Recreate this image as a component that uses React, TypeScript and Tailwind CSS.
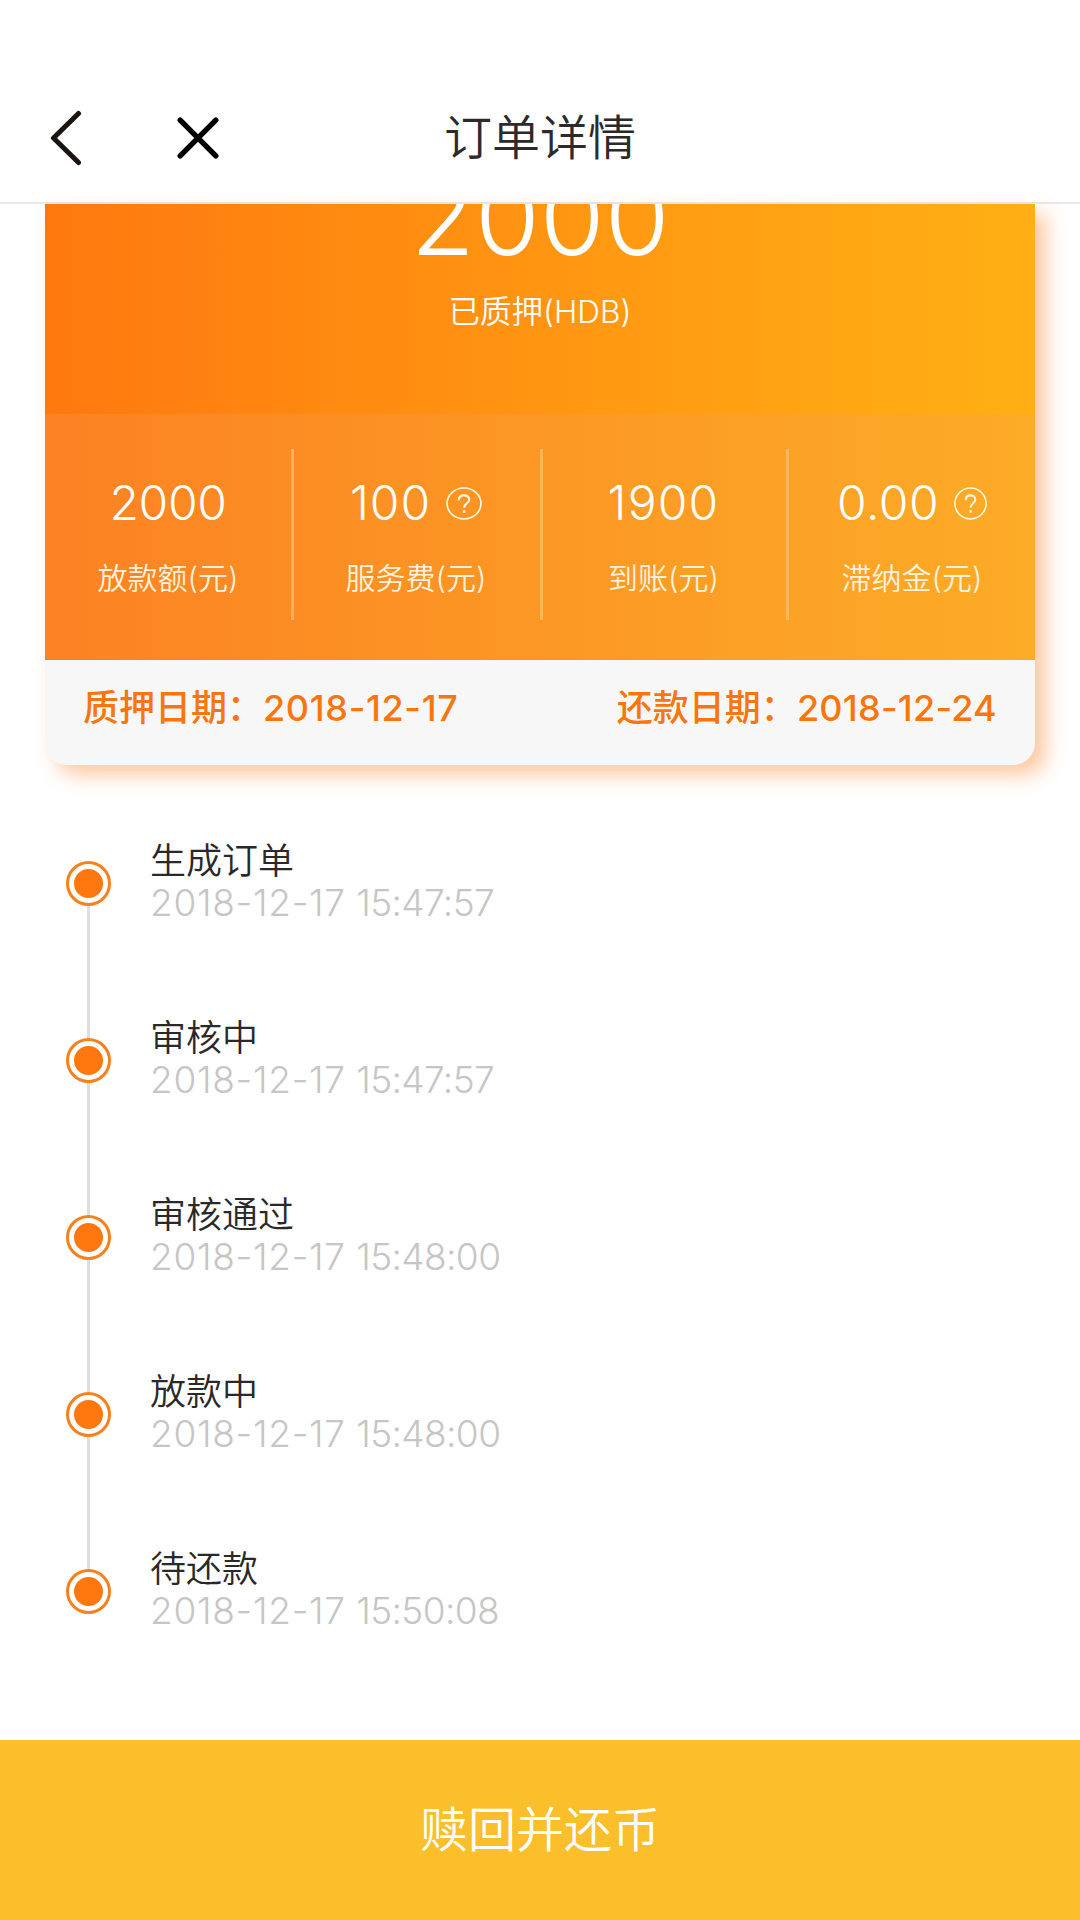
type Stat = { value: string; label: string; help?: string; box: string; divider?: boolean; tracking: string };

const stats: Stat[] = [
  { value: '2000', label: '放款额(元)', box: 'w-[249px]', divider: true, tracking: 'tracking-[-0.3px]' },
  { value: '100', label: '服务费(元)', help: 'w-9', box: 'w-[249px] pr-[2px]', divider: true, tracking: 'tracking-[1px]' },
  { value: '1900', label: '到账(元)', box: 'w-[246px] pr-[2px]', divider: true, tracking: 'tracking-[1.2px]' },
  { value: '0.00', label: '滞纳金(元)', help: 'w-[33px]', box: 'w-[246px] pr-0', tracking: 'tracking-[0.5px]' },
];

const steps = [
  { title: '生成订单', date: '2018-12-17', time: '15:47:57' },
  { title: '审核中', date: '2018-12-17', time: '15:47:57' },
  { title: '审核通过', date: '2018-12-17', time: '15:48:00' },
  { title: '放款中', date: '2018-12-17', time: '15:48:00' },
  { title: '待还款', date: '2018-12-17', time: '15:50:08' },
];

function HelpIcon({ size }: { size: string }) {
  return (
    <svg className={`h-[33px] ${size}`} viewBox="0 0 36 33" preserveAspectRatio="none" fill="none" stroke="#fff6dc">
      <ellipse cx="18" cy="16.5" rx="17" ry="15.5" strokeWidth="1.7" />
      <path d="M12.8 13.2c0-3 2.2-4.8 5.2-4.8s5.2 1.8 5.2 4.4c0 3.6-5.1 3.8-5.1 8" strokeWidth="2.2" />
      <path d="M18.1 23.2v2.6" strokeWidth="2.4" />
    </svg>
  );
}

function Header() {
  return (
    <header className="grid h-[204px] grid-cols-[1fr_auto_1fr] border-b-[2px] border-[#e9e9eb] bg-white pt-[73px]">
      <div className="flex h-[130px] items-center">
        <svg className="ml-[48px] h-[56px] w-[36px]" viewBox="0 0 36 56" fill="none" stroke="#1c1410" strokeWidth="5" strokeLinecap="round" strokeLinejoin="round">
          <path d="M30.5 3.5 5.5 28l25 24.5" />
        </svg>
        <svg className="ml-[92px] h-[44px] w-[44px]" viewBox="0 0 44 44" fill="none" stroke="#000" strokeWidth="5.4" strokeLinecap="round">
          <path d="m4.2 4.2 35.6 35.6M39.8 4.2 4.2 39.8" />
        </svg>
      </div>
      <h1 className="mt-[29px] h-[72px] text-[48px] leading-[72px] font-[350] text-[#2b2b2d]">订单详情</h1>
    </header>
  );
}

function OrderCard() {
  return (
    <section className="mx-[45px] h-[561px] w-[990px] rounded-b-[22px] bg-[#f7f7f7] shadow-[11px_10px_20px_rgba(250,125,30,0.42)]">
      <div className="bg-linear-to-r from-[#ff780f] to-[#ffb014] text-white">
        <div className="h-[210px] overflow-hidden text-center">
          <div className="-mt-[37px] h-[100px] text-[105px] leading-[100px]">2000</div>
          <div className="mt-[23px] text-[31.5px] leading-[44px] font-[350]">已质押(HDB)</div>
        </div>
        <div className="flex h-[246px] bg-[#f3a161]/25 pt-[35px]">
          {stats.map((s) => (
            <div
              key={s.label}
              className={`flex h-[171px] flex-col items-center ${s.box} ${s.divider ? 'border-r-[3px] border-[#ffc56c]/70' : ''}`}
            >
              <div className={`mt-[24px] flex h-[60px] items-center gap-[15px] text-[48px] leading-[60px] font-[350] ${s.tracking}`}>
                {s.value}
                {s.help && <HelpIcon size={s.help} />}
              </div>
              <div className="mt-[23px] text-[30px] leading-[44px] font-[350] text-[#fff1dc]">{s.label}</div>
            </div>
          ))}
        </div>
      </div>
      <div className="flex h-[105px] justify-between px-[38px] text-[36px] leading-[97px] font-medium text-[#f8760d]">
        <span>
          质押日期：<span className="tracking-[0.65px]">2018-12-17</span>
        </span>
        <span>
          还款日期：<span className="tracking-[0.25px]">2018-12-24</span>
        </span>
      </div>
    </section>
  );
}

function Timeline() {
  return (
    <ol className="mt-[73px] flex-1 pl-[66px]">
      {steps.map((s, i) => (
        <li key={s.title} className="flex h-[177px]">
          <div className="flex w-[45px] flex-col items-center pt-[23px]">
            <div className="flex h-[45px] w-[45px] shrink-0 items-center justify-center rounded-full border-[3px] border-[#f8801d] bg-white">
              <div className="h-[29px] w-[29px] rounded-full bg-[#ff780f]" />
            </div>
            {i < steps.length - 1 && <div className="-mb-[23px] w-[3px] flex-1 bg-[#dfdfdf]" />}
          </div>
          <div className="ml-[39px]">
            <div className="h-[44px] text-[36px] leading-[46px] font-[350] text-[#29292b]">{s.title}</div>
            <div className="h-[42px] text-[37px] leading-[42px] text-[#c6c6c6]">
              <span className="tracking-[0.7px]">{s.date}</span> <span className="tracking-[-0.6px]">{s.time}</span>
            </div>
          </div>
        </li>
      ))}
    </ol>
  );
}

export default function App() {
  return (
    <main className="flex h-[1920px] w-[1080px] flex-col overflow-hidden bg-white font-['Inter','Noto_Sans_CJK_SC',sans-serif] font-light whitespace-nowrap">
      <Header />
      <OrderCard />
      <Timeline />
      <button className="h-[180px] w-full bg-[#fbbf2b] text-center text-[48px] leading-[178px] font-[350] text-white">赎回并还币</button>
    </main>
  );
}
